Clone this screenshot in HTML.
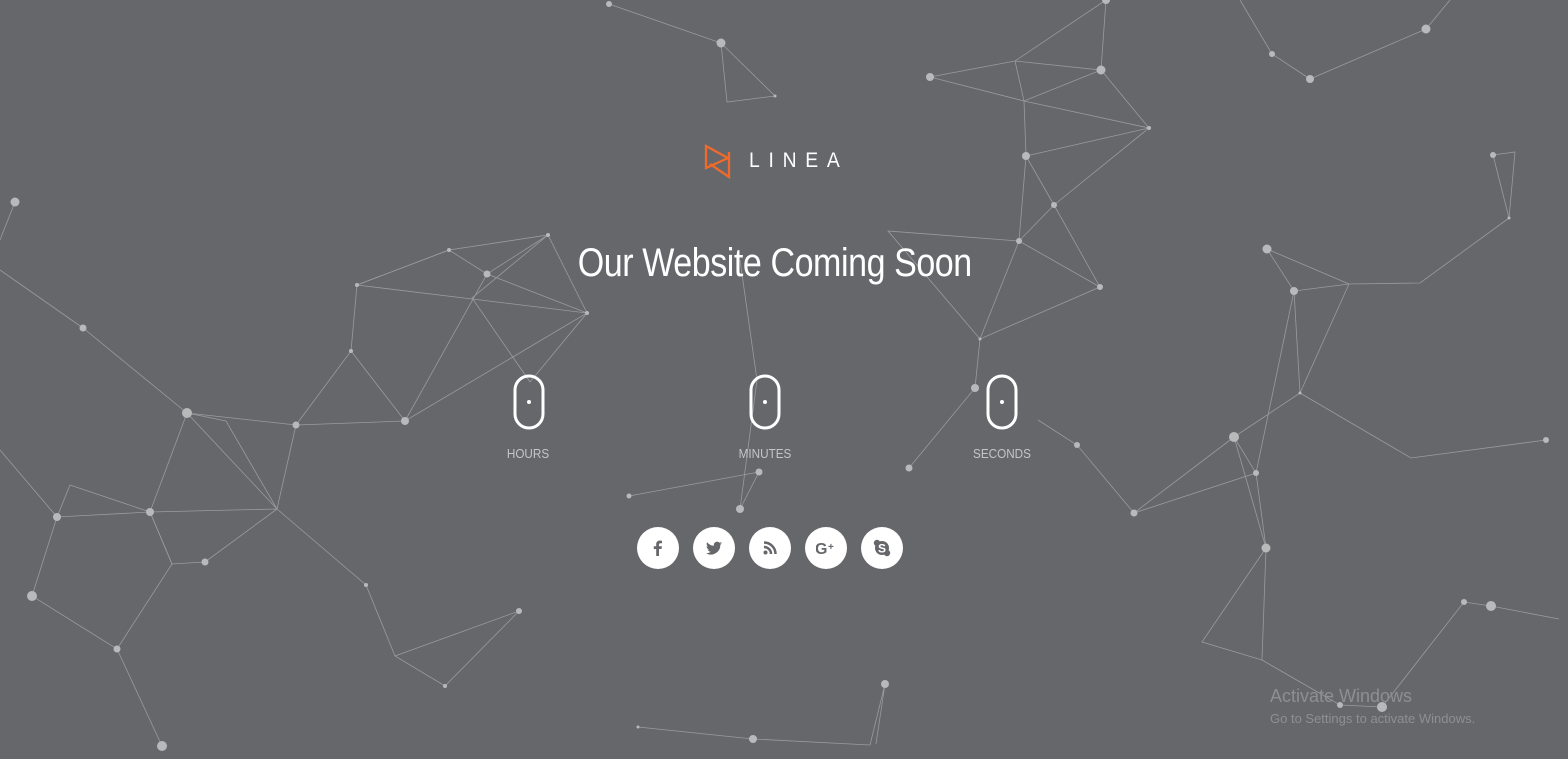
<!DOCTYPE html>
<html><head><meta charset="utf-8">
<style>
html,body{margin:0;padding:0;width:1568px;height:759px;overflow:hidden;background:#66676b;font-family:"Liberation Sans",sans-serif;}
#net{position:absolute;left:0;top:0}
.abs{position:absolute}
.title{left:0;width:1550px;top:241px;text-align:center;color:#fff;font-size:40px;font-weight:300;}
.title span{display:inline-block;transform:scaleX(0.85);letter-spacing:-0.5px}
.lbl{color:#c4c5c8;font-size:13px;width:120px;text-align:center;top:446px;transform:scaleX(0.9)}
.soc{position:absolute;top:527px;width:42px;height:42px;border-radius:50%;background:#fff}
.soc svg{position:absolute;left:11px;top:11px}
.linea{left:749px;top:149px;color:#fff;font-size:21px;letter-spacing:9.5px;transform:scaleX(0.92);transform-origin:left}
</style></head><body>
<svg id="net" width="1568" height="759" stroke="#9a9b9e" stroke-width="0.8" fill="#b8b9bb">
<g fill="none">
<polyline points="609,4 721,43 727,102 775,96 721,43"/>
<polyline points="930,77 1015,61 1101,70 1106,0 1015,61 1024,101 1101,70 1149,128 1026,156 1054,205 1100,287 980,339 975,388 909,468"/>
<polyline points="930,77 1024,101 1149,128 1054,205 1019,241 888,231 980,339 1019,241 1026,156 1024,101"/>
<polyline points="1019,241 1100,287"/>
<polyline points="1240,0 1272,54 1310,79 1426,29 1450,0"/>
<polyline points="1493,155 1515,152 1509,218 1420,283 1349,284 1294,291 1267,249 1349,284 1300,393 1234,437 1134,513 1077,445 1038,420"/>
<polyline points="1300,393 1411,458 1546,440"/>
<polyline points="1300,393 1294,291 1256,473 1266,548 1202,642 1262,660 1266,548 1234,437 1256,473 1134,513"/>
<polyline points="1262,660 1340,705 1382,707 1464,602 1491,606 1559,619"/>
<polyline points="1493,155 1509,218"/>
<polyline points="15,202 0,240"/>
<polyline points="0,270 83,328 187,413 296,425 405,421 587,313 548,235 449,250 357,285 351,351 296,425"/>
<polyline points="351,351 405,421 487,274 548,235 472,298 530,382 587,313 357,285 449,250 487,274 587,313"/>
<polyline points="187,413 150,512 57,517 70,485 150,512 172,564 205,562 277,509 226,421 187,413 277,509 296,425"/>
<polyline points="0,450 57,517 32,596 117,649 172,564 150,512 277,509 366,585 395,656 445,686 519,611 395,656"/>
<polyline points="117,649 162,746"/>
<polyline points="629,496 759,472 740,509 757,380 740,260"/>
<polyline points="638,727 753,739 870,745 885,684 876,744"/>
</g>
<g stroke="none">
<circle cx="609" cy="4" r="3"/><circle cx="721" cy="43" r="4.5"/><circle cx="775" cy="96" r="1.5"/>
<circle cx="930" cy="77" r="4"/><circle cx="1101" cy="70" r="4.5"/><circle cx="1106" cy="0" r="4"/><circle cx="1149" cy="128" r="2"/><circle cx="1026" cy="156" r="4"/><circle cx="1054" cy="205" r="3"/><circle cx="1019" cy="241" r="3"/><circle cx="1100" cy="287" r="3"/><circle cx="975" cy="388" r="4"/><circle cx="909" cy="468" r="3.5"/><circle cx="980" cy="339" r="1.5"/>
<circle cx="1272" cy="54" r="3"/><circle cx="1310" cy="79" r="4"/><circle cx="1426" cy="29" r="4.5"/><circle cx="1493" cy="155" r="3"/><circle cx="1509" cy="218" r="1.5"/><circle cx="1267" cy="249" r="4.5"/><circle cx="1294" cy="291" r="4"/><circle cx="1234" cy="437" r="5"/><circle cx="1256" cy="473" r="3"/><circle cx="1134" cy="513" r="3.5"/><circle cx="1077" cy="445" r="3"/><circle cx="1266" cy="548" r="4.5"/><circle cx="1546" cy="440" r="3"/><circle cx="1464" cy="602" r="3"/><circle cx="1491" cy="606" r="5"/><circle cx="1382" cy="707" r="5"/><circle cx="1340" cy="705" r="3"/><circle cx="1300" cy="393" r="1.5"/>
<circle cx="15" cy="202" r="4.5"/><circle cx="83" cy="328" r="3.5"/><circle cx="187" cy="413" r="5"/><circle cx="296" cy="425" r="3.5"/><circle cx="405" cy="421" r="4"/><circle cx="351" cy="351" r="2"/><circle cx="357" cy="285" r="2"/><circle cx="449" cy="250" r="2"/><circle cx="548" cy="235" r="2"/><circle cx="487" cy="274" r="3.5"/><circle cx="587" cy="313" r="2"/><circle cx="57" cy="517" r="4"/><circle cx="150" cy="512" r="4"/><circle cx="205" cy="562" r="3.5"/><circle cx="32" cy="596" r="5"/><circle cx="117" cy="649" r="3.5"/><circle cx="162" cy="746" r="5"/><circle cx="519" cy="611" r="3"/><circle cx="445" cy="686" r="2"/><circle cx="366" cy="585" r="2"/>
<circle cx="629" cy="496" r="2.5"/><circle cx="759" cy="472" r="3.5"/><circle cx="740" cy="509" r="4"/><circle cx="753" cy="739" r="4"/><circle cx="885" cy="684" r="4"/><circle cx="638" cy="727" r="1.5"/>
</g>
<!-- logo -->
<path d="M706 146 L728 158 L706 168 Z M729 152 V177 L710 164" fill="none" stroke="#f06a2b" stroke-width="2.3" stroke-linejoin="miter"/>
<!-- digits -->
<g fill="none" stroke="#fff" stroke-width="3">
<rect x="515" y="376" width="28" height="52" rx="14"/>
<rect x="751" y="376" width="28" height="52" rx="14"/>
<rect x="988" y="376" width="28" height="52" rx="14"/>
</g>
<g fill="#fff" stroke="none"><circle cx="529" cy="402" r="2"/><circle cx="765" cy="402" r="2"/><circle cx="1002" cy="402" r="2"/></g>
</svg>
<div class="abs linea">LINEA</div>
<div class="abs title"><span>Our Website Coming Soon</span></div>
<div class="abs lbl" style="left:468px">HOURS</div>
<div class="abs lbl" style="left:705px">MINUTES</div>
<div class="abs lbl" style="left:942px">SECONDS</div>
<div class="soc" style="left:637px"><svg width="20" height="20" viewBox="0 0 20 20"><path d="M11 18V11h2.5l.4-2.8H11V6.5c0-.8.3-1.3 1.4-1.3H14V2.7c-.3 0-1.2-.1-2.2-.1-2.2 0-3.6 1.3-3.6 3.7v2H5.8V11h2.4v7z" fill="#66676b"/></svg></div>
<div class="soc" style="left:693px"><svg width="20" height="20" viewBox="0 0 20 20"><path d="M18 5.2c-.6.3-1.2.4-1.9.5.7-.4 1.2-1 1.4-1.8-.6.4-1.3.6-2 .8a3.3 3.3 0 0 0-5.6 3A9.3 9.3 0 0 1 3.1 4.2a3.3 3.3 0 0 0 1 4.4c-.5 0-1-.2-1.5-.4 0 1.6 1.1 2.9 2.6 3.2-.5.1-1 .2-1.5.1.4 1.3 1.6 2.3 3.1 2.3A6.6 6.6 0 0 1 2 15.1a9.3 9.3 0 0 0 14.3-8.3c.7-.4 1.2-1 1.7-1.6z" fill="#66676b"/></svg></div>
<div class="soc" style="left:749px"><svg width="20" height="20" viewBox="0 0 20 20"><circle cx="5.5" cy="14.5" r="2" fill="#66676b"/><path d="M4 9a7 7 0 0 1 7 7M4 4.5a11.5 11.5 0 0 1 11.5 11.5" fill="none" stroke="#66676b" stroke-width="2.5"/></svg></div>
<div class="soc" style="left:805px"><svg width="20" height="20" viewBox="0 0 20 20"><text x="-1" y="16" font-family="Liberation Sans" font-weight="bold" font-size="16" fill="#66676b">G</text><text x="12" y="12" font-family="Liberation Sans" font-weight="bold" font-size="10" fill="#66676b">+</text></svg></div>
<div class="soc" style="left:861px"><svg width="20" height="20" viewBox="0 0 20 20"><circle cx="10" cy="10" r="7" fill="#66676b"/><circle cx="5" cy="5" r="3.2" fill="#66676b"/><circle cx="15" cy="15" r="3.2" fill="#66676b"/><text x="10" y="14.5" text-anchor="middle" font-family="Liberation Sans" font-weight="bold" font-size="12" fill="#fff">S</text></svg></div>
<div class="abs" style="left:1270px;top:686px;color:#8e8f92;font-size:18px">Activate Windows</div>
<div class="abs" style="left:1270px;top:711px;color:#8e8f92;font-size:13px">Go to Settings to activate Windows.</div>
</body></html>
